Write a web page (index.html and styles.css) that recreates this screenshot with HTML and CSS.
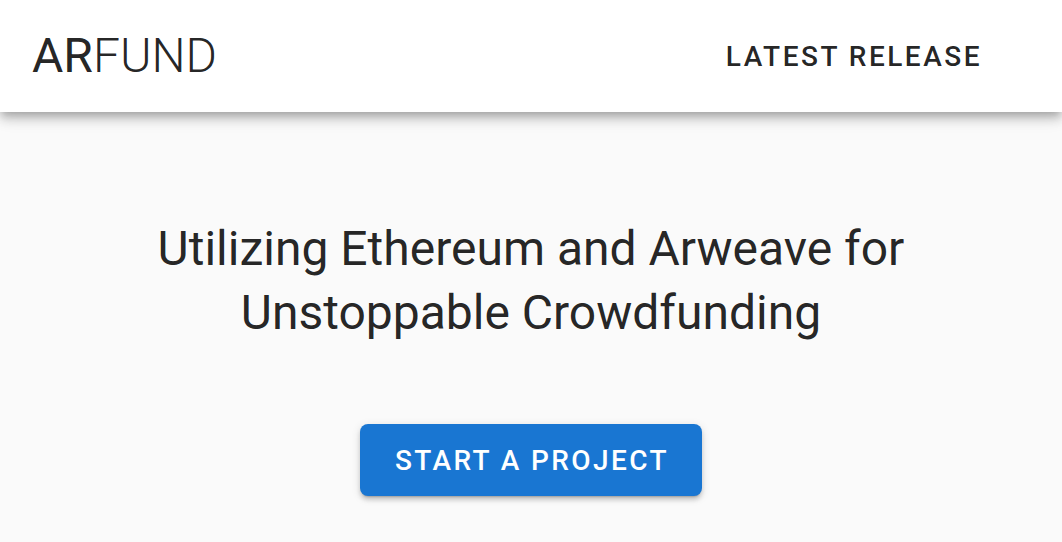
FILE: index.html
```html
<!DOCTYPE html>
<html>
<head>
<meta charset="utf-8">
<link rel="stylesheet" href="styles.css">
</head>
<body>
<header class="appbar">
  <div class="logo"><span class="logo-bold">AR</span><span class="logo-light">FUND</span></div>
  <a class="nav-btn" href="#">Latest Release</a>
</header>
<main class="hero">
  <h1 class="headline">Utilizing Ethereum and Arweave for<br>Unstoppable Crowdfunding</h1>
  <a class="cta" href="#">Start a Project</a>
</main>
</body>
</html>
```

FILE: styles.css
```css
html, body {
  margin: 0;
  padding: 0;
  height: 100%;
}
body {
  background: #fafafa;
  font-family: Roboto, "Noto Sans", sans-serif;
  color: rgba(0, 0, 0, 0.87);
  overflow: hidden;
}
.appbar {
  position: relative;
  z-index: 2;
  height: 112px;
  background: #fff;
  display: flex;
  align-items: center;
  justify-content: space-between;
  padding: 0 82px 0 32px;
  box-shadow: 0 4px 8px -2px rgba(0,0,0,.2), 0 8px 10px 0 rgba(0,0,0,.14), 0 2px 20px 0 rgba(0,0,0,.12);
}
.logo {
  font-size: 48px;
  line-height: 1;
  color: rgba(0, 0, 0, 0.87);
  margin-top: -1px;
}
.logo-bold { font-weight: 400; }
.logo-light { font-weight: 300; }
.nav-btn {
  font-size: 28px;
  font-weight: 500;
  letter-spacing: 2.5px;
  text-transform: uppercase;
  text-decoration: none;
  color: rgba(0, 0, 0, 0.87);
  margin-right: -2px;
}
.hero {
  display: flex;
  flex-direction: column;
  align-items: center;
  padding-top: 105px;
}
.headline {
  margin: 0;
  font-size: 48px;
  line-height: 64px;
  font-weight: 400;
  text-align: center;
  color: rgba(0, 0, 0, 0.87);
}
.cta {
  margin-top: 79px;
  height: 72px;
  padding: 0 33px 0 35px;
  display: flex;
  align-items: center;
  background: #1976d2;
  color: #fff;
  border-radius: 8px;
  font-size: 28px;
  font-weight: 500;
  letter-spacing: 2.4px;
  text-transform: uppercase;
  text-decoration: none;
  box-shadow: 0 3px 2px -2px rgba(0,0,0,.2), 0 4px 4px 0 rgba(0,0,0,.14), 0 2px 10px 0 rgba(0,0,0,.12);
}
```
